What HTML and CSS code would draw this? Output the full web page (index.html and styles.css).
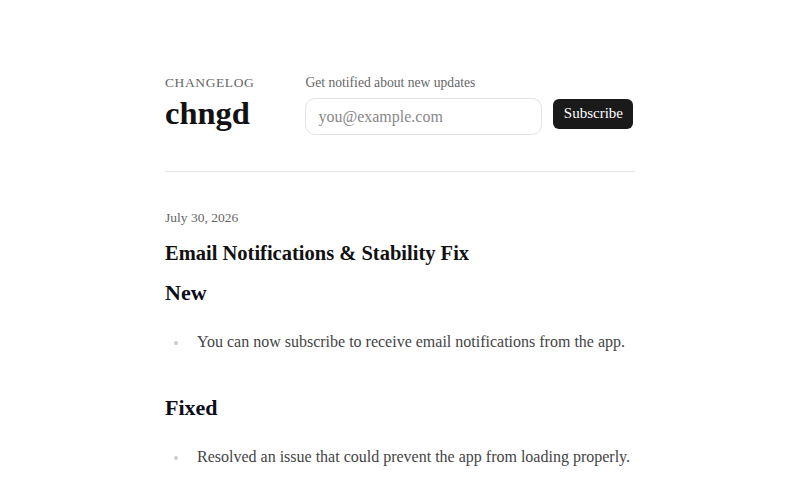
FILE: index.html
```html
<!DOCTYPE html>
<html>
<head>
<meta charset="utf-8">
<link rel="stylesheet" href="styles.css">
</head>
<body>
<div class="page">
  <header class="header">
    <div class="brand">
      <div class="eyebrow">CHANGELOG</div>
      <div class="logo">chngd</div>
    </div>
    <div class="subscribe">
      <div class="sub-label">Get notified about new updates</div>
      <div class="sub-row">
        <input class="email" type="text" placeholder="you@example.com">
        <button class="btn">Subscribe</button>
      </div>
    </div>
  </header>
  <hr class="divider">
  <article class="entry">
    <div class="date">July 30, 2026</div>
    <h1 class="title">Email Notifications &amp; Stability Fix</h1>
    <h2 class="section">New</h2>
    <ul class="list">
      <li>You can now subscribe to receive email notifications from the app.</li>
    </ul>
    <h2 class="section">Fixed</h2>
    <ul class="list last">
      <li>Resolved an issue that could prevent the app from loading properly.</li>
    </ul>
  </article>
</div>
</body>
</html>
```
FILE: styles.css
```css
html, body {
  margin: 0;
  padding: 0;
  background: #fff;
}
body {
  font-family: "Liberation Serif", "Times New Roman", serif;
  color: #111;
}
.page {
  width: 470px;
  margin: 0 auto;
  padding-top: 75px;
}
.header {
  display: flex;
  align-items: flex-start;
  gap: 51px;
}
.eyebrow {
  font-size: 13.5px;
  letter-spacing: 0.6px;
  color: #666;
  line-height: 16px;
}
.logo {
  font-size: 32.5px;
  font-weight: bold;
  line-height: 36px;
  margin-top: 4px;
  color: #111;
}
.sub-label {
  font-size: 13.6px;
  color: #666;
  line-height: 16px;
}
.sub-row {
  display: flex;
  align-items: center;
  gap: 11px;
  margin-top: 7px;
}
.email {
  width: 237px;
  height: 37px;
  box-sizing: border-box;
  border: 1px solid #e3e3e3;
  border-radius: 10px;
  padding: 0 12px;
  font-family: "Liberation Serif", "Times New Roman", serif;
  font-size: 16px;
  color: #333;
  outline: none;
}
.email::placeholder {
  color: #888;
}
.btn {
  height: 30px;
  width: 80px;
  border: none;
  border-radius: 6px;
  background: #1a1a1a;
  color: #fff;
  font-family: "Liberation Serif", "Times New Roman", serif;
  font-size: 15px;
  padding: 0;
  margin-top: -6px;
}
.divider {
  border: none;
  border-top: 1px solid #e6e6e6;
  margin: 36px 0 0;
}
.entry {
  padding-top: 38px;
}
.date {
  font-size: 13.5px;
  color: #666;
  line-height: 16px;
}
.title {
  font-size: 20.5px;
  font-weight: bold;
  margin: 15px 0 0;
  line-height: 24px;
}
.section {
  font-size: 22px;
  font-weight: bold;
  margin: 14px 0 0;
  line-height: 28px;
  color: #0d0d1a;
}
.list {
  margin: 25px 0 0;
  padding-left: 32px;
  list-style: none;
}
.list li {
  position: relative;
  font-size: 16px;
  line-height: 20px;
  color: #444;
  margin-bottom: 42px;
}
.list.last li {
  margin-bottom: 0;
}
.list li::before {
  content: "";
  position: absolute;
  left: -23px;
  top: 9px;
  width: 4px;
  height: 4px;
  border-radius: 50%;
  background: #ccc;
}
```
